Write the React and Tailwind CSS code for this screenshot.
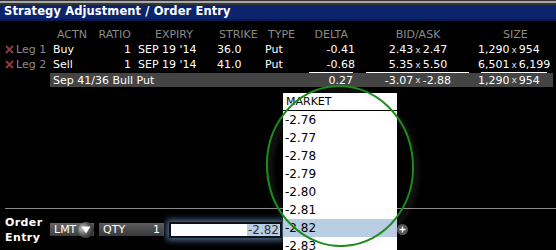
import React from "react";

const cols = "grid grid-cols-[50px_45px_37px_78px_52px_38px_60px_116px_80px]";

const legs = [
  { n: 1, actn: "Buy", strike: "36.0", delta: "-0.41", bid: "2.43", ask: "2.47", bs: "1,290", as: "954" },
  { n: 2, actn: "Sell", strike: "41.0", delta: "-0.68", bid: "5.35", ask: "5.50", bs: "6,501", as: "6,199" },
];

const prices = ["-2.76", "-2.77", "-2.78", "-2.79", "-2.80", "-2.81", "-2.82", "-2.83"];

const By = () => <span className="text-[9px] mx-[2px] text-[#ddd]">x</span>;

const XMark = () => (
  <svg width="9" height="9" viewBox="0 0 9 9" className="mr-[2px]">
    <path d="M1 1 L8 8 M8 1 L1 8" stroke="#8c3a3a" strokeWidth="2" />
  </svg>
);

export default function App() {
  return (
    <div
      className="relative w-[556px] h-[250px] bg-black overflow-hidden text-white text-[11px]"
      style={{ fontFamily: '"DejaVu Sans", Verdana, sans-serif' }}
    >
      {/* title bar */}
      <div className="h-px bg-[#333]" />
      <div className="h-[2px] bg-[#a8a8a8]" />
      <div className="h-[2px] bg-[#333]" />
      <div className="h-[14px] bg-[#0b246c] flex items-center pl-[4px] font-bold text-[11.5px] tracking-[0.1px] leading-none">
        Strategy Adjustment / Order Entry
      </div>
      <div className="h-[2px] bg-[#071a4e]" />

      {/* table header */}
      <div className={`${cols} mt-[6px] h-[15px] items-center text-[#8a8a8a] leading-none`}>
        <div />
        <div className="pl-[7px]">ACTN</div>
        <div className="text-right pr-[1px]">RATIO</div>
        <div className="pl-[23px]">EXPIRY</div>
        <div className="pl-[9px]">STRIKE</div>
        <div className="pl-[6px]">TYPE</div>
        <div className="text-right pr-[12px]">DELTA</div>
        <div className="text-center">BID/ASK</div>
        <div className="pl-[27px]">SIZE</div>
      </div>

      {legs.map((l) => (
        <div key={l.n} className={`${cols} h-[15px] items-center leading-none`}>
          <div className="flex items-center pl-[5px] text-[#8a8a8a]">
            <XMark />
            Leg {l.n}
          </div>
          <div className="pl-[3px]">{l.actn}</div>
          <div className="text-right pr-[1px]">1</div>
          <div className="pl-[6px]">SEP 19 '14</div>
          <div className="pl-[7px]">{l.strike}</div>
          <div className="pl-[3px]">Put</div>
          <div className="text-right pr-[5px]">{l.delta}</div>
          <div className="text-center">
            {l.bid}
            <By />
            {l.ask}
          </div>
          <div className="pl-[2px]">
            {l.bs}
            <By />
            {l.as}
          </div>
        </div>
      ))}

      {/* totals underline */}
      <div className={`${cols} h-px`}>
        <div className="col-span-6" />
        <div className="ml-[9px] mr-[7px] bg-white" />
        <div className="ml-[6px] mr-[7px] bg-white" />
        <div className="ml-[5px] mr-[9px] bg-white" />
      </div>

      {/* strategy row */}
      <div className={`${cols} h-[14px] items-center leading-none`}>
        <div />
        <div className="col-span-5 h-full flex items-center bg-[#444] pl-[3px]">Sep 41/36 Bull Put</div>
        <div className="h-full flex items-center justify-end bg-[#444] pr-[7px]">0.27</div>
        <div className="h-full flex items-center justify-center bg-[#444]">
          -3.07
          <By />
          -2.88
        </div>
        <div className="h-full flex items-center bg-[#444] pl-[2px] mr-[3px]">
          1,290
          <By />
          954
        </div>
      </div>

      {/* separator */}
      <div className="mt-[121px] ml-[5px] h-px bg-[#8a8a8a]" />

      {/* order entry */}
      <div className="flex items-center h-[41px]">
        <div className="w-[50px] pl-[5px] font-bold text-[11px] leading-[15px] tracking-[0.4px]">
          Order
          <br />
          Entry
        </div>
        <div className="flex items-center w-[44px] h-[13px] bg-gradient-to-b from-[#666] to-[#3e3e3e] pl-[4px] text-[11px] leading-none">
          LMT
          <span
            className="ml-[2px] w-[16px] h-[16px] rounded-full flex items-center justify-center"
            style={{ background: "radial-gradient(circle at 30% 40%, #c8c8c8, #5a5a5a 45%, #1a1a1a 90%)" }}
          >
            <svg width="10" height="8" viewBox="0 0 10 8">
              <path d="M0.5 0.5 H9.5 L5 7.5 Z" fill="#fff" />
            </svg>
          </span>
        </div>
        <div className="ml-[5px] flex items-center justify-between w-[65px] h-[13px] bg-gradient-to-b from-[#5c5c5c] to-[#383838] px-[4px] text-[11px] leading-none">
          <span>QTY</span>
          <span>1</span>
        </div>
        <div className="ml-[5px] flex items-center justify-end w-[113px] h-[16px] bg-white border-2 border-[#111] shadow-[0_0_6px_2px_rgba(110,160,215,0.75)] text-[12px] leading-none text-[#333]">
          <span className="bg-[#b9cde3] h-full flex items-center pl-[1px] pr-[1px]">-2.82</span>
        </div>
        <div className="ml-[115px] w-[11px] h-[11px] rounded-full bg-[#555] flex items-center justify-center">
          <svg width="7" height="7" viewBox="0 0 7 7">
            <path d="M3.5 0.5 V6.5 M0.5 3.5 H6.5" stroke="#fff" strokeWidth="1.4" />
          </svg>
        </div>
      </div>

      {/* price dropdown */}
      <div className="absolute left-[283px] top-[93px] w-[114px] bg-white text-black text-[12px] leading-none">
        <div className="h-[18px] flex items-center pl-[3px] text-[11px] border-b border-black">MARKET</div>
        {prices.map((p) => (
          <div
            key={p}
            className={`h-[18px] flex items-center pl-[2px] ${p === "-2.82" ? "bg-[#b9cde3]" : ""}`}
          >
            {p}
          </div>
        ))}
      </div>

      {/* annotation ellipse */}
      <svg className="absolute left-[255px] top-[78px]" width="175" height="180" viewBox="0 0 175 180">
        <defs>
          <filter id="blur" x="-20%" y="-20%" width="140%" height="140%">
            <feGaussianBlur stdDeviation="2.5" />
          </filter>
        </defs>
        <ellipse cx="88" cy="92" rx="73" ry="80" transform="rotate(-4 88 92)" fill="none" stroke="rgba(200,200,200,0.18)" strokeWidth="3" filter="url(#blur)" />
        <ellipse cx="85" cy="88" rx="73" ry="80" transform="rotate(-4 85 88)" fill="none" stroke="#1b8c1b" strokeWidth="2" />
      </svg>
    </div>
  );
}
